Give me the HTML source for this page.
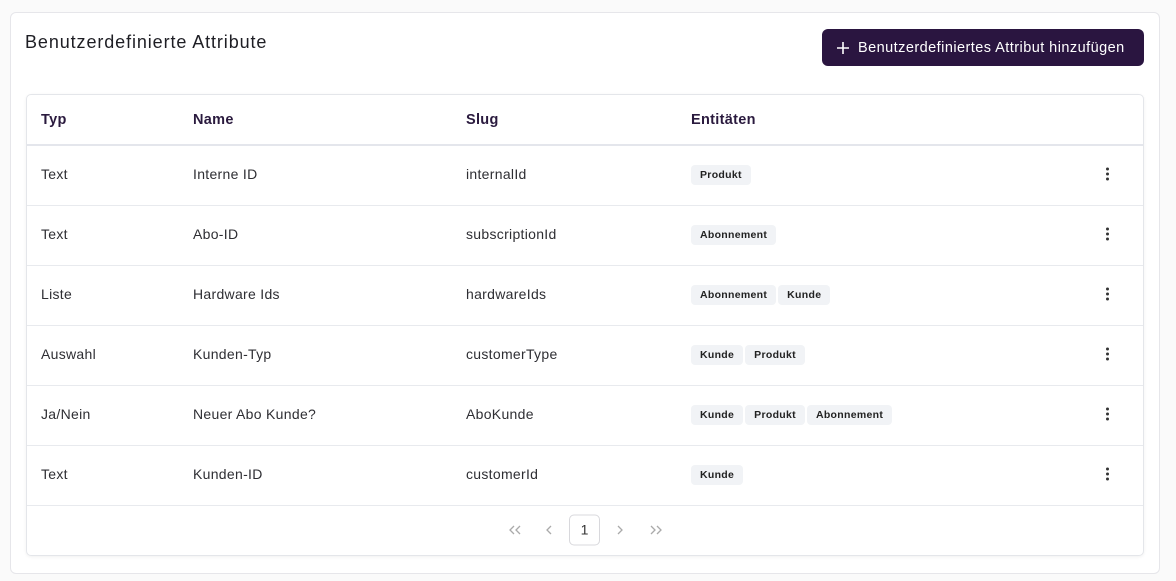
<!DOCTYPE html>
<html><head><meta charset="utf-8"><style>
*{box-sizing:border-box;margin:0;padding:0}
body{width:1176px;height:581px;background:#fafafa;font-family:"Liberation Sans",sans-serif;color:#222;position:relative;overflow:hidden}
.card{position:absolute;left:10px;top:12px;width:1150px;height:562px;background:#fff;border:1px solid #e6e6ea;border-radius:6px}
h1{position:absolute;left:25px;top:32px;font-size:18px;font-weight:400;color:#1e1e24;letter-spacing:0.9px}
.btn{position:absolute;left:822px;top:29px;width:322px;height:37px;background:#2a1540;border-radius:6px;color:#fff;font-size:14.5px;display:flex;align-items:center;padding-left:14px;gap:8px;letter-spacing:0.45px}
.tbl{position:absolute;left:26px;top:94px;width:1118px;height:462px;border:1px solid #e4e6ea;border-radius:5px;box-shadow:0 1px 3px rgba(0,0,0,.06);overflow:hidden}
.row{position:absolute;left:0;width:1116px;height:60px;border-bottom:1px solid #e8eaee;font-size:14px;color:#2e2e33;letter-spacing:0.3px}
.row span{position:absolute;top:50%;transform:translateY(calc(-50% - 2px))}
.row span.c4{transform:translateY(calc(-50% - 1px))}
.hd{top:0;height:51px;border-bottom:2px solid #e4e6ec;font-weight:700;color:#2a1a3e;font-size:14.5px}
.hd span,.hd span.c4{transform:translateY(-50%)}
.c1{left:14px}.c2{left:166px}.c3{left:439px}.c4{left:664px}
.b{display:inline-block;background:#f1f3f6;border-radius:4px;font-size:10.5px;font-weight:700;color:#222;padding:4px 9px;margin-right:2px;letter-spacing:0.3px}
.dots{left:1079px;width:4px}
.dots i{display:block;width:3px;height:3px;background:#333;border-radius:50%;margin:2px 0}
.pg{position:absolute;left:0;top:410px;width:1116px;height:50px;font-size:13px;color:#aaa}
.pg span,.pg svg{position:absolute;top:50%;transform:translateY(-50%)}
.pg .cur{left:542px;width:31px;height:31px;border:1px solid #d8d8dc;border-radius:5px;color:#333;text-align:center;line-height:29px;font-size:14px}
</style></head><body>
<div class="card"></div>
<h1>Benutzerdefinierte Attribute</h1>
<div class="btn"><svg width="14" height="14" viewBox="0 0 14 14"><path d="M7 1v12M1 7h12" stroke="#fff" stroke-width="1.6"/></svg>Benutzerdefiniertes Attribut hinzufügen</div>
<div class="tbl">
<div class="row hd"><span class="c1">Typ</span><span class="c2">Name</span><span class="c3">Slug</span><span class="c4">Entitäten</span></div>
<div class="row" style="top:51px"><span class="c1">Text</span><span class="c2">Interne ID</span><span class="c3">internalId</span><span class="c4"><b class="b">Produkt</b></span><span class="dots"><i></i><i></i><i></i></span></div>
<div class="row" style="top:111px"><span class="c1">Text</span><span class="c2">Abo-ID</span><span class="c3">subscriptionId</span><span class="c4"><b class="b">Abonnement</b></span><span class="dots"><i></i><i></i><i></i></span></div>
<div class="row" style="top:171px"><span class="c1">Liste</span><span class="c2">Hardware Ids</span><span class="c3">hardwareIds</span><span class="c4"><b class="b">Abonnement</b><b class="b">Kunde</b></span><span class="dots"><i></i><i></i><i></i></span></div>
<div class="row" style="top:231px"><span class="c1">Auswahl</span><span class="c2">Kunden-Typ</span><span class="c3">customerType</span><span class="c4"><b class="b">Kunde</b><b class="b">Produkt</b></span><span class="dots"><i></i><i></i><i></i></span></div>
<div class="row" style="top:291px"><span class="c1">Ja/Nein</span><span class="c2">Neuer Abo Kunde?</span><span class="c3">AboKunde</span><span class="c4"><b class="b">Kunde</b><b class="b">Produkt</b><b class="b">Abonnement</b></span><span class="dots"><i></i><i></i><i></i></span></div>
<div class="row" style="top:351px"><span class="c1">Text</span><span class="c2">Kunden-ID</span><span class="c3">customerId</span><span class="c4"><b class="b">Kunde</b></span><span class="dots"><i></i><i></i><i></i></span></div>
<div class="pg">
<svg style="left:481px" width="14" height="10" viewBox="0 0 14 10"><path d="M6 1L2 5l4 4M12 1L8 5l4 4" fill="none" stroke="#aaa" stroke-width="1.3"/></svg>
<svg style="left:518px" width="8" height="10" viewBox="0 0 8 10"><path d="M6 1L2 5l4 4" fill="none" stroke="#aaa" stroke-width="1.3"/></svg>
<span class="cur">1</span>
<svg style="left:589px" width="8" height="10" viewBox="0 0 8 10"><path d="M2 1l4 4-4 4" fill="none" stroke="#aaa" stroke-width="1.3"/></svg>
<svg style="left:622px" width="14" height="10" viewBox="0 0 14 10"><path d="M2 1l4 4-4 4M8 1l4 4-4 4" fill="none" stroke="#aaa" stroke-width="1.3"/></svg>
</div>
</div>
</body></html>
